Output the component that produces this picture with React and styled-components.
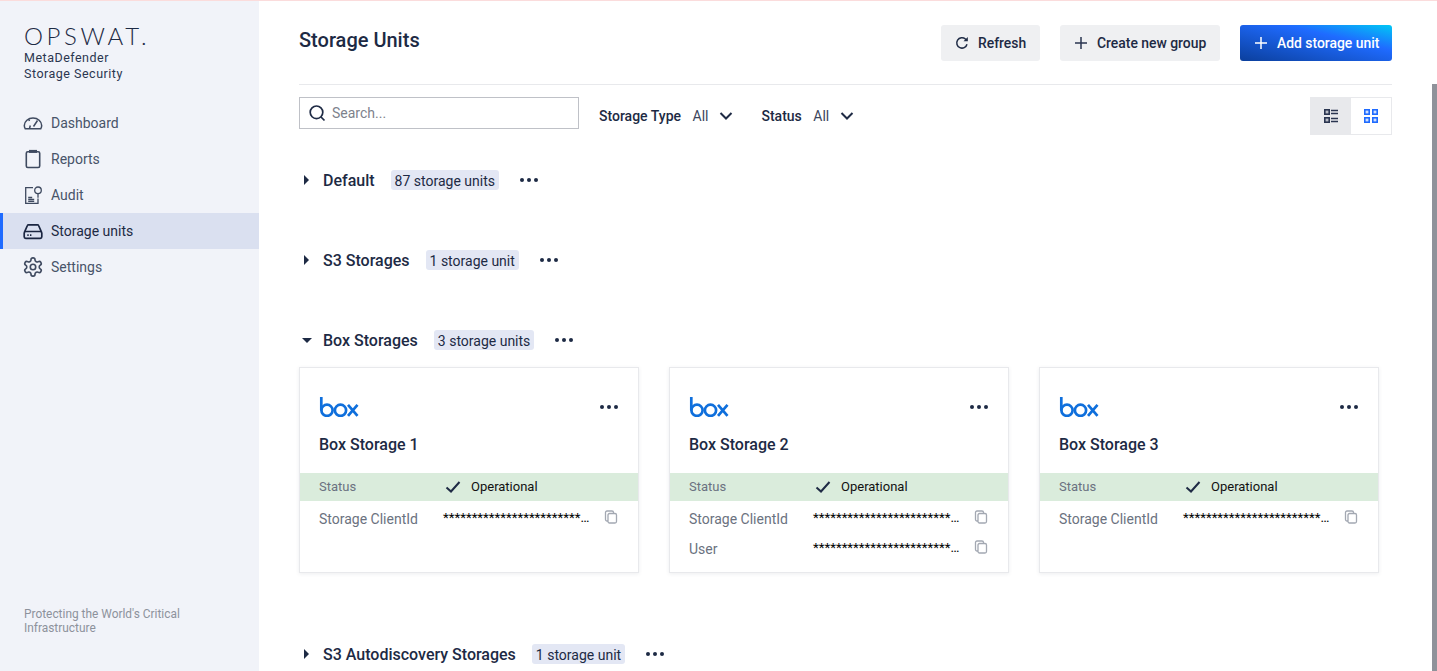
// Dependencies
import styled, { createGlobalStyle } from 'styled-components'

const GlobalStyle = createGlobalStyle`
  html, body {
    margin: 0;
    height: 100%;
    overflow: hidden;
    background: #fff;
  }
  body {
    font-family: Roboto, "Liberation Sans", sans-serif;
    color: #1d2a44;
  }
`

// Icons
const DashboardIcon = () => (
  <svg width="20" height="20" viewBox="0 0 20 20" fill="none" stroke="#3f4a60" strokeWidth="1.5">
    <path d="M2.2 15.700h15.600c.6-1 .9-2 .9-3.200C18.700 8.400 14.800 5 10 5S1.300 8.400 1.300 12.500c0 1.200.3 2.200.9 3.200z" />
    <path d="M6.500 15.500l.8-3M5.500 6l1 2M14.500 7.500L10.500 13.500" />
  </svg>
)

const ReportsIcon = () => (
  <svg width="20" height="20" viewBox="0 0 20 20" fill="none" stroke="#3f4a60" strokeWidth="1.6">
    <rect x="3.300" y="2.800" width="13.400" height="15.700" rx="1.500" />
    <path d="M6 2.400h8" strokeWidth="3" />
  </svg>
)

const AuditIcon = () => (
  <svg width="20" height="20" viewBox="0 0 20 20" fill="none" stroke="#3f4a60" strokeWidth="1.3">
    <path d="M10 2.700H2.700V18.400h12.300v-5" />
    <circle cx="15" cy="5.300" r="3.300" />
    <path d="M15 8.800v4M5.200 12.500h4M5.200 14.500h6M5.200 16.300h6" />
  </svg>
)

const StorageIcon = () => (
  <svg width="20" height="20" viewBox="0 0 20 20" fill="none" stroke="#1a2540" strokeWidth="1.7">
    <path d="M1.600 10.800l2.800-6.300c.2-.5.6-.7 1.100-.7h9c.5 0 .9.200 1.100.7l2.800 6.300" />
    <rect x="1.200" y="10.500" width="17.600" height="6.800" rx="1.500" />
    <path d="M4.300 14.200h1.400M7 14.200h1.400" />
  </svg>
)

const SettingsIcon = () => (
  <svg width="20" height="20" viewBox="1 1 22 22" fill="none" stroke="#3f4a60" strokeWidth="1.8" strokeLinecap="round" strokeLinejoin="round">
    <path d="M12.220 2h-.44a2 2 0 0 0-2 2v.18a2 2 0 0 1-1 1.730l-.43.250a2 2 0 0 1-2 0l-.15-.08a2 2 0 0 0-2.730.730l-.22.380a2 2 0 0 0 .73 2.730l.15.100a2 2 0 0 1 1 1.720v.510a2 2 0 0 1-1 1.740l-.15.090a2 2 0 0 0-.73 2.730l.22.380a2 2 0 0 0 2.730.730l.15-.08a2 2 0 0 1 2 0l.43.250a2 2 0 0 1 1 1.730V20a2 2 0 0 0 2 2h.44a2 2 0 0 0 2-2v-.18a2 2 0 0 1 1-1.730l.43-.250a2 2 0 0 1 2 0l.15.080a2 2 0 0 0 2.730-.730l.22-.390a2 2 0 0 0-.73-2.730l-.15-.080a2 2 0 0 1-1-1.740v-.500a2 2 0 0 1 1-1.740l.15-.090a2 2 0 0 0 .73-2.730l-.22-.380a2 2 0 0 0-2.730-.730l-.15.080a2 2 0 0 1-2 0l-.43-.250a2 2 0 0 1-1-1.730V4a2 2 0 0 0-2-2z" />
    <circle cx="12" cy="12" r="3" />
  </svg>
)

const RefreshIcon = () => (
  <svg width="14" height="14" viewBox="0 0 14 14" fill="none" stroke="#1f2b45" strokeWidth="1.5">
    <path d="M12 8.200A5.200 5.200 0 1 1 10.400 3L12 4.500" />
    <path d="M12.800 1v4.300H8.500z" fill="#1f2b45" stroke="none" />
  </svg>
)

const PlusIcon = ({ color }) => (
  <svg width="14" height="14" viewBox="0 0 14 14" fill="none" stroke={color} strokeWidth="1.5">
    <path d="M7 1v12M1 7h12" />
  </svg>
)

const SearchIcon = () => (
  <svg width="18" height="18" viewBox="0 0 18 18" fill="none" stroke="#1f2b45" strokeWidth="1.7">
    <circle cx="8.500" cy="8.300" r="6.300" />
    <path d="M13 13l3.500 3.500" />
  </svg>
)

const ChevronIcon = () => (
  <svg width="14" height="10" viewBox="0 0 14 10" fill="none" stroke="#1f2b45" strokeWidth="2">
    <path d="M1.500 2l5.500 5.500L12.500 2" />
  </svg>
)

const ListViewIcon = () => (
  <svg width="14" height="14" viewBox="0 0 14 14" fill="#b9bcc4" stroke="#2a3550" strokeWidth="1.6">
    <rect x=".8" y=".8" width="4.400" height="4.400" />
    <rect x=".8" y="8.800" width="4.400" height="4.400" />
    <path d="M7 1.500h7M7 4.500h7M7 9.500h7M7 12.500h7" />
  </svg>
)

const GridViewIcon = () => (
  <svg width="14" height="14" viewBox="0 0 14 14" fill="#cfe0ff" stroke="#1f6bff" strokeWidth="1.6">
    <rect x=".8" y=".8" width="4.400" height="4.400" />
    <rect x="8.800" y=".8" width="4.400" height="4.400" />
    <rect x=".8" y="8.800" width="4.400" height="4.400" />
    <rect x="8.800" y="8.800" width="4.400" height="4.400" />
  </svg>
)

const CheckIcon = () => (
  <CheckSvg width="16" height="12" viewBox="0 0 16 12" fill="none" stroke="#1f2b45" strokeWidth="2">
    <path d="M1.500 6.500l4.500 4L14.500 1" />
  </CheckSvg>
)

const CopyIcon = () => (
  <CopySvg width="14" height="14" viewBox="0 0 14 14" fill="none" stroke="#a3a8b2" strokeWidth="1.3">
    <rect x="4" y="3.500" width="8.500" height="9.500" rx="1.500" />
    <path d="M4 11H3a1.500 1.500 0 0 1-1.500-1.500v-7A1.500 1.500 0 0 1 3 1h5a1.500 1.500 0 0 1 1.500 1.500v1" />
  </CopySvg>
)

const BoxLogo = () => (
  <svg width="40" height="20" viewBox="0 0 40 20" fill="none" stroke="#0f6fdc" strokeWidth="2.7">
    <path d="M2.300 0v13.500" />
    <circle cx="8" cy="13.300" r="5.600" />
    <circle cx="21.500" cy="13.300" r="5.600" />
    <path d="M29 7.800l9.500 11M38.500 7.800L29 18.800" />
  </svg>
)

const Dots = () => (
  <DotRow aria-hidden="true">
    <Dot /><Dot /><Dot />
  </DotRow>
)

const navItems = [
  { label: 'Dashboard', icon: <DashboardIcon /> },
  { label: 'Reports', icon: <ReportsIcon /> },
  { label: 'Audit', icon: <AuditIcon /> },
  { label: 'Storage units', icon: <StorageIcon />, active: true },
  { label: 'Settings', icon: <SettingsIcon /> },
]

const boxCards = [
  { name: 'Box Storage 1', rows: ['Storage ClientId'] },
  { name: 'Box Storage 2', rows: ['Storage ClientId', 'User'] },
  { name: 'Box Storage 3', rows: ['Storage ClientId'] },
]

const masked = '*'.repeat(24) + '…'

function GroupHeader({ name, count, open }) {
  return (
    <GroupRow>
      <Caret $open={open} />
      <GroupName>{name}</GroupName>
      <CountBadge>{count}</CountBadge>
      <Dots />
    </GroupRow>
  )
}

export default function App() {
  return (
    <Page>
      <GlobalStyle />
      <TopLine />
      <Shell>
        <Sidebar>
          <Brand>
            <Logo>OPSWAT.</Logo>
            <Product>MetaDefender<br />Storage Security</Product>
          </Brand>
          <Nav>
            {navItems.map((item) => (
              <NavItem key={item.label} $active={item.active}>
                {item.icon}
                {item.label}
              </NavItem>
            ))}
          </Nav>
          <Tagline>Protecting the World's Critical Infrastructure</Tagline>
        </Sidebar>

        <Main>
          <Header>
            <Title>Storage Units</Title>
            <Actions>
              <Button $width={99}><RefreshIcon /> Refresh</Button>
              <Button $width={160}><PlusIcon color="#2a3550" /> Create new group</Button>
              <PrimaryButton $width={152}><PlusIcon color="#fff" /> Add storage unit</PrimaryButton>
            </Actions>
          </Header>

          <Filters>
            <SearchBox>
              <SearchIcon />
              <span>Search...</span>
            </SearchBox>
            <Filter>
              <FilterLabel>Storage Type</FilterLabel>
              <FilterValue>All</FilterValue>
              <ChevronIcon />
            </Filter>
            <Filter>
              <FilterLabel>Status</FilterLabel>
              <FilterValue>All</FilterValue>
              <ChevronIcon />
            </Filter>
            <ViewToggle>
              <ViewOption $selected><ListViewIcon /></ViewOption>
              <ViewOption><GridViewIcon /></ViewOption>
            </ViewToggle>
          </Filters>

          <Group><GroupHeader name="Default" count="87 storage units" /></Group>
          <Group><GroupHeader name="S3 Storages" count="1 storage unit" /></Group>
          <OpenGroup>
            <GroupHeader name="Box Storages" count="3 storage units" open />
            <Cards>
              {boxCards.map((card) => (
                <Card key={card.name}>
                  <CardTop>
                    <BoxLogo />
                    <CardMenu><Dots /></CardMenu>
                  </CardTop>
                  <CardName>{card.name}</CardName>
                  <StatusRow>
                    <StatusLabel>Status</StatusLabel>
                    <StatusValue><CheckIcon /> Operational</StatusValue>
                  </StatusRow>
                  <Fields>
                    {card.rows.map((row) => (
                      <Field key={row}>
                        <RowLabel>{row}</RowLabel>
                        <Masked>{masked}</Masked>
                        <CopyIcon />
                      </Field>
                    ))}
                  </Fields>
                </Card>
              ))}
            </Cards>
          </OpenGroup>
          <GroupHeader name="S3 Autodiscovery Storages" count="1 storage unit" />
        </Main>
      </Shell>
      <ScrollThumb />
    </Page>
  )
}

const Page = styled.div`
  position: relative;
  height: 671px;
  overflow: hidden;
`

const TopLine = styled.div`
  height: 1px;
  background: #fbdcdc;
`

const Shell = styled.div`
  display: flex;
  height: 670px;
`

const Sidebar = styled.aside`
  width: 259px;
  flex: none;
  display: flex;
  flex-direction: column;
  background: #f1f3f9;
`

const Brand = styled.div`
  padding: 21px 24px 0;
  height: 83px;
`

const Logo = styled.div`
  font-family: Lato, sans-serif;
  font-weight: 300;
  font-size: 24px;
  line-height: 28px;
  letter-spacing: 3.6px;
  color: #1d2a44;
`

const Product = styled.div`
  font-size: 12.5px;
  line-height: 16px;
  letter-spacing: 0.5px;
  color: #2b3650;
`

const Nav = styled.nav`
  display: flex;
  flex-direction: column;
`

const NavItem = styled.div`
  display: flex;
  align-items: center;
  gap: 8px;
  height: 36px;
  padding-left: 23px;
  font-size: 14px;
  color: ${(p) => (p.$active ? '#1d2a44' : '#485469')};
  background: ${(p) => (p.$active ? '#dae0f0' : 'transparent')};
  box-shadow: ${(p) => (p.$active ? 'inset 3px 0 0 #1f6bff' : 'none')};
`

const Tagline = styled.div`
  margin-top: auto;
  padding: 0 60px 36px 24px;
  font-size: 11.9px;
  line-height: 14px;
  color: #8d929c;
`

const Main = styled.main`
  flex: 1;
  padding: 24px 45px 0 40px;
  min-width: 0;
`

const Header = styled.header`
  display: flex;
  justify-content: space-between;
  height: 59px;
  border-bottom: 1px solid #e8e9ec;
`

const Title = styled.h1`
  margin: 0;
  font-size: 20px;
  font-weight: 500;
  line-height: 30px;
  color: #1d2a44;
`

const Actions = styled.div`
  display: flex;
  gap: 20px;
  height: 36px;
`

const Button = styled.button`
  display: flex;
  align-items: center;
  gap: 9px;
  box-sizing: border-box;
  width: ${(p) => p.$width}px;
  height: 36px;
  padding: 0 0 0 14px;
  border: 0;
  border-radius: 3px;
  background: #eff0f2;
  font-family: inherit;
  font-size: 13.9px;
  font-weight: 500;
  white-space: nowrap;
  color: #1d2a44;
`

const PrimaryButton = styled(Button)`
  color: #fff;
  background: linear-gradient(to top right, #0b3f9c 0%, #1f6bff 65%, #00c8f5 100%);
`

const Filters = styled.div`
  display: flex;
  align-items: flex-start;
  margin: 12px 0 33px;
  height: 38px;
`

const SearchBox = styled.div`
  display: flex;
  align-items: center;
  gap: 6px;
  box-sizing: border-box;
  width: 280px;
  height: 32px;
  padding: 0 8px;
  border: 1px solid #bfc1c7;
  font-size: 14px;
  color: #7d828c;
  margin-right: 20px;
`

const Filter = styled.div`
  display: flex;
  align-items: center;
  height: 38px;
  margin-right: 28px;
  font-size: 14px;
`

const FilterLabel = styled.span`
  font-weight: 500;
  margin-right: 11.5px;
`

const FilterValue = styled.span`
  color: #3c465c;
  margin-right: 11px;
`

const ViewToggle = styled.div`
  display: flex;
  margin-left: auto;
  box-sizing: border-box;
  height: 38px;
  border: 1px solid #e8e9ec;
`

const ViewOption = styled.div`
  display: flex;
  align-items: center;
  justify-content: center;
  width: 40px;
  background: ${(p) => (p.$selected ? '#e8e9ec' : '#fff')};
`

const Group = styled.section`
  height: 80px;
`

const OpenGroup = styled.section`
  height: 314px;
`

const GroupRow = styled.div`
  display: flex;
  align-items: center;
  height: 24px;
`

const Caret = styled.span`
  width: 0;
  height: 0;
  ${(p) =>
    p.$open
      ? 'margin: 0 11px 0 3px; border-left: 5px solid transparent; border-right: 5px solid transparent; border-top: 5px solid #1d2a44;'
      : 'margin: 0 14px 0 5px; border-top: 5px solid transparent; border-bottom: 5px solid transparent; border-left: 5px solid #1d2a44;'}
`

const GroupName = styled.span`
  font-size: 16px;
  font-weight: 500;
  color: #1d2a44;
`

const CountBadge = styled.span`
  margin: 0 21px 0 16px;
  padding: 0 4px;
  height: 20px;
  line-height: 22px;
  border-radius: 3px;
  background: #e3e7f4;
  font-size: 14px;
  color: #1d2a44;
`

const DotRow = styled.span`
  display: inline-flex;
  gap: 3px;
`

const Dot = styled.i`
  width: 4px;
  height: 4px;
  border-radius: 50%;
  background: #1d2a44;
`

const Cards = styled.div`
  display: flex;
  gap: 30px;
  margin-top: 15px;
`

const Card = styled.article`
  box-sizing: border-box;
  width: 340px;
  height: 206px;
  border: 1px solid #e8e9ec;
  box-shadow: 0 1px 4px rgba(30, 40, 70, 0.08);
  background: #fff;
`

const CardTop = styled.div`
  display: flex;
  align-items: center;
  justify-content: space-between;
  padding: 29px 19px 0;
  height: 20px;
`

const CardMenu = styled.span`
  display: flex;
  margin: 0 1px 1px 0;
`

const CardName = styled.div`
  padding: 17px 19px 0;
  height: 39px;
  font-size: 16px;
  font-weight: 500;
  line-height: 22px;
  color: #1d2a44;
`

const StatusRow = styled.div`
  display: flex;
  align-items: center;
  box-sizing: border-box;
  height: 28px;
  padding: 0 0 2px 19px;
  background: #daecdc;
`

const RowLabel = styled.span`
  width: 124px;
  flex: none;
  font-size: 14px;
  color: #6b7280;
`

const StatusLabel = styled(RowLabel)`
  width: 126px;
  font-size: 13px;
`

const StatusValue = styled.span`
  display: flex;
  align-items: center;
  gap: 10px;
  font-size: 13px;
  color: #111;
`

const CheckSvg = styled.svg`
  margin-top: 2px;
`

const Fields = styled.div`
  display: flex;
  flex-direction: column;
  gap: 10px;
  padding: 8px 20px 0 19px;
`

const Field = styled.div`
  display: flex;
  align-items: center;
  height: 20px;
`

const Masked = styled.span`
  flex: 1;
  margin-bottom: 4px;
  white-space: nowrap;
  font-size: 13.3px;
  color: #000;
`

const CopySvg = styled.svg`
  flex: none;
  margin-bottom: 4px;
`

const ScrollThumb = styled.div`
  position: absolute;
  top: 84px;
  right: 0;
  bottom: 0;
  width: 5px;
  background: #8f929a;
`
